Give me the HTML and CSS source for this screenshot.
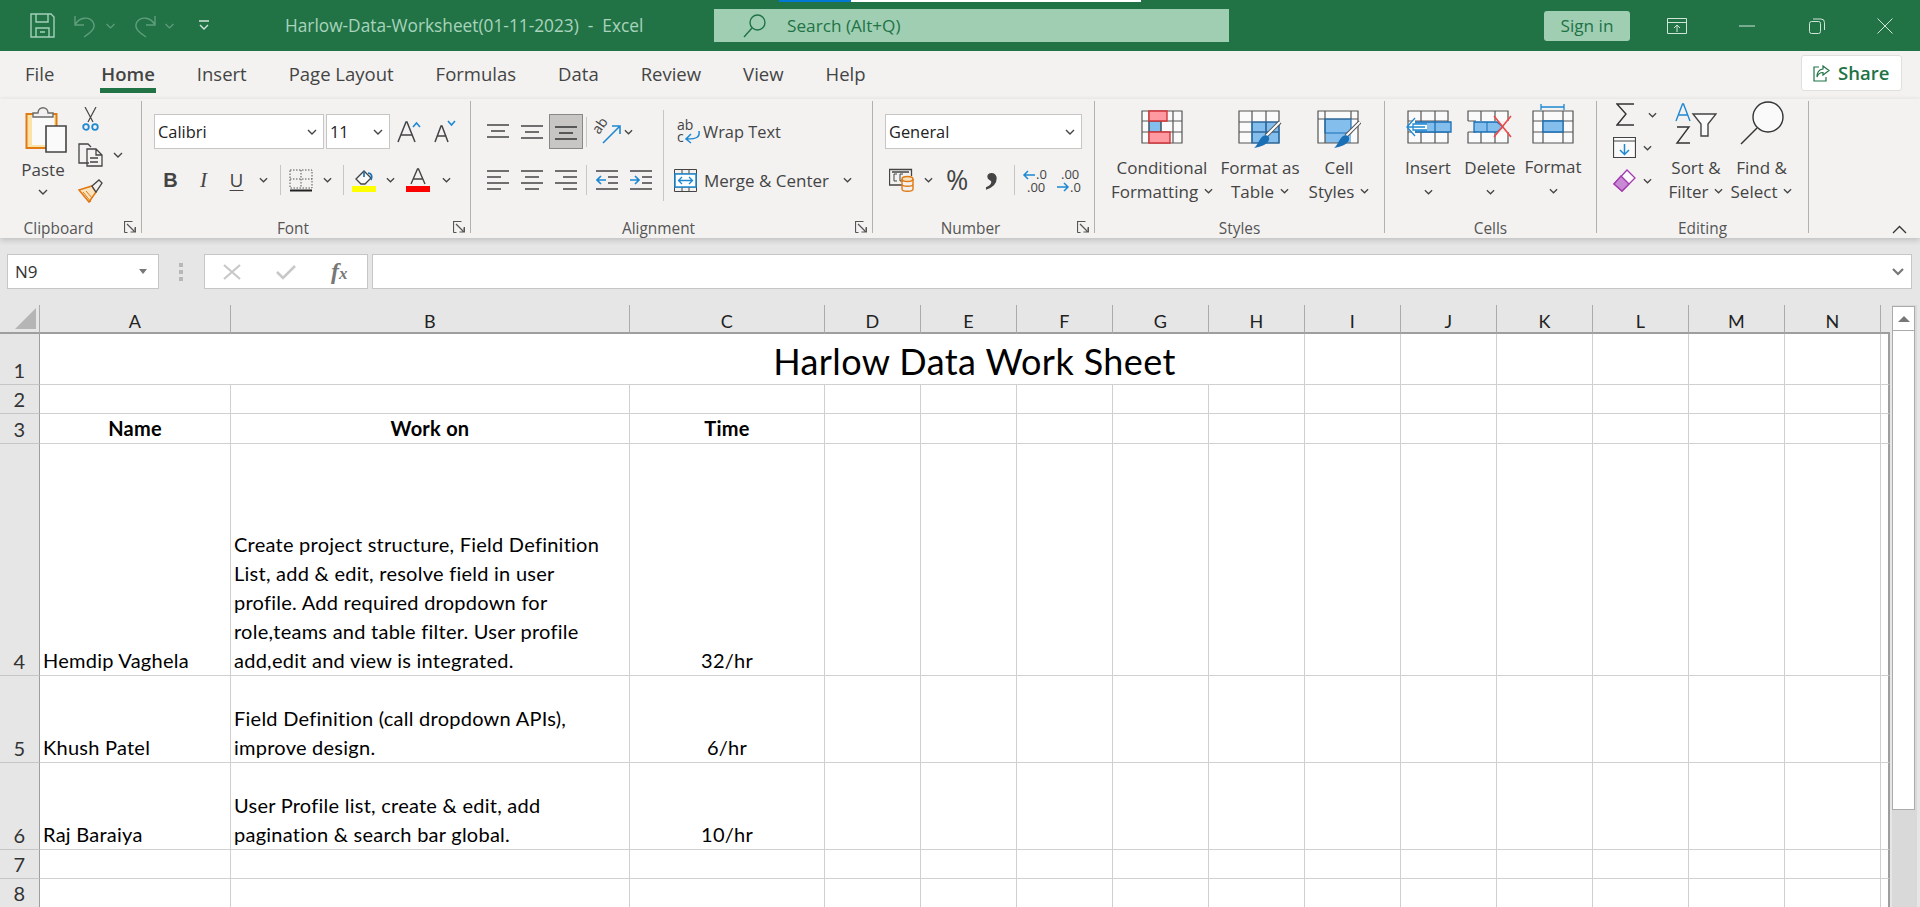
FILE: index.html
```html
<!DOCTYPE html>
<html lang="en">
  <head>
    <meta charset="UTF-8" />
    <title>Harlow-Data-Worksheet(01-11-2023) - Excel</title>
    <link rel="stylesheet" href="styles.css">
  </head>
  <body>
    <svg class="defs" width="0" height="0">
      <symbol id="chev" viewBox="0 0 10 6"><path d="M1 1l4 4 4-4" fill="none" stroke="#444" stroke-width="1.4"/></symbol>
      <symbol id="launch" viewBox="0 0 12 12"><path d="M.5 11.5V.5h8M.5 11.5h3M11.5 11.5V6M3 3l8 8M11 6.5V11H6.5" fill="none" stroke="#555" stroke-width="1.2"/></symbol>
    </svg>

    <header class="titlebar">
      <div class="qat">
        <svg class="q-save" width="25" height="25" viewBox="0 0 25 25" fill="none" stroke="#a3d0b8" stroke-width="1.4"><path d="M1 1h20l3 3v20H1zM6 1v8h12V1M6 24v-9h13v9M10 19h5"/></svg>
        <svg class="q-undo" width="23" height="24" viewBox="0 0 23 24" fill="none" stroke="#5f9e7c" stroke-width="1.4"><path d="M1 2v9h9M1 11C5 3 15 2 19 8c3 5 0 9-9 15"/></svg>
        <svg class="q-chev" width="9" height="6"><path d="M.5 1l4 4 4-4" fill="none" stroke="#5f9e7c" stroke-width="1.2"/></svg>
        <svg class="q-redo" width="23" height="24" viewBox="0 0 23 24" fill="none" stroke="#5f9e7c" stroke-width="1.4"><path d="M22 2v9h-9M22 11C18 3 8 2 4 8c-3 5 0 9 9 15"/></svg>
        <svg class="q-chev" width="9" height="6"><path d="M.5 1l4 4 4-4" fill="none" stroke="#5f9e7c" stroke-width="1.2"/></svg>
        <svg class="q-more" width="12" height="11" viewBox="0 0 12 11" fill="none" stroke="#cfe5d9" stroke-width="1.4"><path d="M1 1h10M2 5l4 4 4-4"/></svg>
      </div>
      <div class="doc-title">Harlow-Data-Worksheet(01-11-2023)&nbsp; -&nbsp; Excel</div>
      <div class="searchbox">
        <svg width="24" height="24" viewBox="0 0 24 24" fill="none" stroke="#217346" stroke-width="1.4"><circle cx="14.5" cy="8.5" r="7.5"/><path d="M9 14L1 23"/></svg>
        <span>Search (Alt+Q)</span>
      </div>
      <div class="signin">Sign in</div>
      <div class="winbtns">
        <svg width="20" height="16" viewBox="0 0 20 16" fill="none" stroke="#cfe5d9"><path d="M.5 .5h19v15H.5zM.5 4.5h19M10 14V7M7 10l3-3 3 3"/></svg>
        <svg width="16" height="2" viewBox="0 0 16 2"><path d="M0 1h16" stroke="#cfe5d9"/></svg>
        <svg width="16" height="16" viewBox="0 0 16 16" fill="none" stroke="#cfe5d9"><rect x=".5" y="3.5" width="11" height="12" rx="2"/><path d="M4 1h8a3.5 3.5 0 0 1 3.5 3.5V12"/></svg>
        <svg width="16" height="16" viewBox="0 0 16 16" fill="none" stroke="#cfe5d9"><path d="M.5 .5l15 15M15.5 .5l-15 15"/></svg>
      </div>
      <div class="loadbar"><i></i><b></b></div>
    </header>

    <nav class="tabs">
      <a>File</a>
      <a class="active">Home</a>
      <a>Insert</a>
      <a>Page Layout</a>
      <a>Formulas</a>
      <a>Data</a>
      <a>Review</a>
      <a>View</a>
      <a>Help</a>
      <div class="share">
        <svg width="17" height="17" viewBox="0 0 17 17" fill="none" stroke="#217346" stroke-width="1.2"><path d="M6 2H1v14h12v-4M10 1l6 4.5-6 4.5V7.5C7 7.5 5 9 4 12c0-5 2-7.5 6-8z"/></svg>
        Share
      </div>
    </nav>

    <section class="ribbon">
      <!-- Clipboard -->
      <div class="group g-clipboard">
        <div class="body">
          <div class="paste">
            <svg class="paste-ic" width="42" height="46" viewBox="0 0 42 46" fill="none">
              <path d="M1.5 7h30v34h-30z" fill="#fbe3a8" stroke="#e07a14" stroke-width="2"/>
              <path d="M7 8h22v30H7z" fill="#fafafa"/>
              <path d="M8 10V6h5c0-7 10-7 10 0h5v4z" fill="#f2f1f0" stroke="#6b6b6b" stroke-width="1.4"/>
              <path d="M21 19h20v26H21z" fill="#fafafa" stroke="#444" stroke-width="1.6"/>
            </svg>
            <span class="lbl">Paste</span>
            <svg class="chev" width="10" height="6"><use href="#chev"/></svg>
          </div>
          <div class="clip-small">
            <svg width="17" height="24" viewBox="0 0 17 24" fill="none"><path d="M3 0l8 15M14 0L6 15" stroke="#444" stroke-width="1.2"/><circle cx="4" cy="20" r="2.8" stroke="#1e88d2" stroke-width="1.8"/><circle cx="13" cy="20" r="2.8" stroke="#1e88d2" stroke-width="1.8"/></svg>
            <div class="copy-row">
              <svg width="25" height="24" viewBox="0 0 25 24" fill="none" stroke="#444" stroke-width="1.3"><path d="M11 20H1V1h9l3 3"/><path d="M9 6h9l6 6v11H9zM18 6v6h6M12 15h8M12 19h8"/></svg>
              <svg class="chev" width="10" height="6"><use href="#chev"/></svg>
            </div>
            <svg width="25" height="24" viewBox="0 0 25 24" fill="none"><path d="M1 11l13-4 4 6-7 10z" fill="#fbe3c0" stroke="#e07a14" stroke-width="1.6"/><path d="M5 13l8 10M8 12l6 7" stroke="#e07a14"/><path d="M14 7l7-6 3 3-6 9z" fill="#f2f1f0" stroke="#444" stroke-width="1.3"/></svg>
          </div>
        </div>
        <div class="foot">Clipboard<svg class="launcher" width="12" height="12"><use href="#launch"/></svg></div>
      </div>

      <!-- Font -->
      <div class="group g-font">
        <div class="body col">
          <div class="row">
            <div class="select sel-font">Calibri<svg width="10" height="6"><use href="#chev"/></svg></div>
            <div class="select sel-size">11<svg width="10" height="6"><use href="#chev"/></svg></div>
            <svg class="grow" width="24" height="24" viewBox="0 0 24 24" fill="none"><path d="M1 22L9 2h1l8 20M4 15h11" stroke="#444" stroke-width="1.5"/><path d="M16 7l3.5-4L23 7" stroke="#1e88d2" stroke-width="1.6"/></svg>
            <svg class="shrink" width="22" height="24" viewBox="0 0 22 24" fill="none"><path d="M1 22L7 6h1l6 16M3.5 16h9" stroke="#444" stroke-width="1.5"/><path d="M14 1l3.5 4L21 1" stroke="#1e88d2" stroke-width="1.6"/></svg>
          </div>
          <div class="row row2">
            <div class="tool fmt-b">B</div>
            <div class="tool fmt-i">I</div>
            <div class="tool fmt-u">U</div>
            <div class="drop"><svg width="9" height="6"><use href="#chev"/></svg></div>
            <div class="vsep s-a"></div>
            <div class="tool"><svg width="24" height="23" viewBox="0 0 24 23" fill="none"><path d="M1 1h22v18H1zM12 1v18M1 10h22" stroke="#555" stroke-dasharray="1.5 1.5"/><path d="M1 21.5h22" stroke="#222" stroke-width="2"/></svg></div>
            <div class="drop"><svg width="9" height="6"><use href="#chev"/></svg></div>
            <div class="vsep s-b"></div>
            <div class="tool"><svg width="24" height="24" viewBox="0 0 24 24" fill="none"><path d="M4 11l8-8 7 7-6 6H9z" fill="#fafafa" stroke="#444" stroke-width="1.3"/><path d="M12 3v6M19 12c2-4 0-7-3-7" stroke="#1a6fb5" stroke-width="1.7"/><path d="M0 21h24" stroke="#ff0" stroke-width="6"/></svg></div>
            <div class="drop"><svg width="9" height="6"><use href="#chev"/></svg></div>
            <div class="tool t-color"><svg width="24" height="24" viewBox="0 0 24 24" fill="none"><path d="M5 16L11.5 1h1L19 16M7.5 11h9" stroke="#444" stroke-width="1.4"/><path d="M0 21h24" stroke="#f00" stroke-width="6"/></svg></div>
            <div class="drop"><svg width="9" height="6"><use href="#chev"/></svg></div>
          </div>
        </div>
        <div class="foot">Font<svg class="launcher" width="12" height="12"><use href="#launch"/></svg></div>
      </div>

      <!-- Alignment -->
      <div class="group g-align">
        <div class="body">
          <div class="col align-left">
            <div class="row">
              <div class="tool t-a"><svg width="22" height="16" viewBox="0 0 22 16" stroke="#444" stroke-width="1.4"><path d="M0 1h22M4 7h14M0 13h22"/></svg></div>
              <div class="tool t-a"><svg width="22" height="16" viewBox="0 0 22 16" stroke="#444" stroke-width="1.4"><path d="M0 2h22M4 8h14M0 14h22"/></svg></div>
              <div class="tool t-a selected"><svg width="22" height="16" viewBox="0 0 22 16" stroke="#333" stroke-width="1.4"><path d="M0 3h22M4 9h14M0 15h22"/></svg></div>
              <div class="vsep s-c"></div>
              <div class="tool t-o"><svg class="txt-ic" width="25" height="24" viewBox="0 0 25 24" fill="none"><text class="mini" transform="translate(4 15) rotate(-55)">ab</text><path d="M8 23L24 7M17 6h8v8" stroke="#1e88d2" stroke-width="1.6"/></svg></div>
              <svg class="chev" width="9" height="6"><use href="#chev"/></svg>
            </div>
            <div class="row row2">
              <div class="tool t-a"><svg width="22" height="20" viewBox="0 0 22 20" stroke="#444" stroke-width="1.4"><path d="M0 1h22M0 7h14M0 13h22M0 19h14"/></svg></div>
              <div class="tool t-a"><svg width="22" height="20" viewBox="0 0 22 20" stroke="#444" stroke-width="1.4"><path d="M0 1h22M4 7h14M0 13h22M4 19h14"/></svg></div>
              <div class="tool t-a"><svg width="22" height="20" viewBox="0 0 22 20" stroke="#444" stroke-width="1.4"><path d="M0 1h22M8 7h14M0 13h22M8 19h14"/></svg></div>
              <div class="vsep s-c"></div>
              <div class="tool t-a"><svg width="22" height="20" viewBox="0 0 22 20" fill="none" stroke-width="1.4"><path d="M0 1h22M12 7h10M12 13h10M0 19h22" stroke="#444"/><path d="M1 10h9M5 6l-4 4 4 4" stroke="#1e88d2" stroke-width="1.7"/></svg></div>
              <div class="tool t-a"><svg width="22" height="20" viewBox="0 0 22 20" fill="none" stroke-width="1.4"><path d="M0 1h22M12 7h10M12 13h10M0 19h22" stroke="#444"/><path d="M0 10h9M5 6l4 4-4 4" stroke="#1e88d2" stroke-width="1.7"/></svg></div>
            </div>
          </div>
          <div class="vsep-tall"></div>
          <div class="col align-right">
            <div class="row wrap-row">
              <svg class="txt-ic" width="23" height="24" viewBox="0 0 23 24" fill="none"><text x="0" y="10" class="mini">ab</text><text x="0" y="22" class="mini">c</text><path d="M22 11c1 6-2 8-12 8M14 14l-5 5 5 4" stroke="#1e88d2" stroke-width="1.5"/></svg>
              <span class="lbl wrap-lbl">Wrap Text</span>
            </div>
            <div class="row merge-row">
              <svg width="23" height="23" viewBox="0 0 23 23" fill="none"><path d="M.5 .5h22v22H.5zM.5 5h22M.5 18h22M8 .5V5M15 .5V5M8 18v4.5M15 18v4.5" stroke="#444"/><path d="M1 5h21v13H1z" fill="#fff" stroke="#1e88d2" stroke-width="1.5"/><path d="M5 11.5h13M8 8l-3.5 3.5L8 15M15 8l3.5 3.5L15 15" stroke="#1e88d2" stroke-width="1.3"/></svg>
              <span class="lbl">Merge &amp; Center</span>
              <svg class="chev" width="9" height="6"><use href="#chev"/></svg>
            </div>
          </div>
        </div>
        <div class="foot">Alignment<svg class="launcher" width="12" height="12"><use href="#launch"/></svg></div>
      </div>

      <!-- Number -->
      <div class="group g-number">
        <div class="body col">
          <div class="row">
            <div class="select sel-num">General<svg width="10" height="6"><use href="#chev"/></svg></div>
          </div>
          <div class="row row2">
            <svg class="acct" width="25" height="24" viewBox="0 0 25 24" fill="none"><path d="M13 17H.5V1.5h22V8M3 4h17" stroke="#444" stroke-width="1.3"/><path d="M8 6H5v7h3M14 6h-3v7h3" stroke="#444"/><ellipse cx="18.5" cy="11" rx="5.5" ry="2.5" fill="#fbe3c0" stroke="#e07a14" stroke-width="1.4"/><path d="M13 11v10c0 3 11 3 11 0V11M13 16c0 3 11 3 11 0" fill="none" stroke="#e07a14" stroke-width="1.4"/></svg>
            <svg class="chev c-acct" width="9" height="6"><use href="#chev"/></svg>
            <div class="glyph pct">%</div>
            <div class="glyph comma">,</div>
            <div class="vsep s-d"></div>
            <svg class="txt-ic dec-1" width="24" height="24" viewBox="0 0 24 24" fill="none"><path d="M1 7h11M5 3L1 7l4 4" stroke="#1e88d2" stroke-width="1.5"/><text x="13" y="11" class="mini-n">.0</text><text x="4" y="24" class="mini-n">.00</text></svg>
            <svg class="txt-ic dec-2" width="24" height="24" viewBox="0 0 24 24" fill="none"><text x="4" y="11" class="mini-n">.00</text><path d="M0 19h11M7 15l4 4-4 4" stroke="#1e88d2" stroke-width="1.5"/><text x="13" y="24" class="mini-n">.0</text></svg>
          </div>
        </div>
        <div class="foot">Number<svg class="launcher" width="12" height="12"><use href="#launch"/></svg></div>
      </div>

      <!-- Styles -->
      <div class="group g-styles">
        <div class="body">
          <div class="big w-cond">
            <svg width="42" height="34" viewBox="0 0 42 34" fill="none">
              <path d="M1 1h40v32H1z" fill="#fafafa"/>
              <path d="M8 11h12v11H8z" fill="#83beec" stroke="#1a6fb5"/>
              <path d="M1 1h40v32H1zM1 11h40M1 22h40M8 1v32M20 1v32M32 1v32" stroke="#555" stroke-width="1.2"/>
              <path d="M8 1h18v10H8zM8 22h21v11H8z" fill="#ff9aa2" stroke="#d13438" stroke-width="1.4"/>
            </svg>
            <span>Conditional</span>
            <span>Formatting<svg class="chev" width="9" height="6"><use href="#chev"/></svg></span>
          </div>
          <div class="big w-fmt">
            <svg width="44" height="40" viewBox="0 0 44 40" fill="none">
              <path d="M1 1h40v32H1z" fill="#fafafa"/>
              <path d="M14 12h27v21H14z" fill="#83beec"/>
              <path d="M1 1h40v32H1zM1 12h40M1 22h40M14 1v32M28 1v32" stroke="#555" stroke-width="1.2"/>
              <path d="M14 12h27v21H14zM14 22h27M28 12v21" stroke="#1a6fb5" stroke-width="1.2"/>
              <path d="M42 12L28 26" stroke="#555" stroke-width="4"/>
              <path d="M42 12L28 26" stroke="#fff" stroke-width="2"/>
              <path d="M25 26c4-2 7 1 6 4-2 5-9 7-15 8 4-3 5-9 9-12z" fill="#1a6fb5"/>
            </svg>
            <span>Format as</span>
            <span>Table<svg class="chev" width="9" height="6"><use href="#chev"/></svg></span>
          </div>
          <div class="big w-cell">
            <svg width="44" height="40" viewBox="0 0 44 40" fill="none">
              <path d="M1 1h40v32H1z" fill="#fafafa"/>
              <path d="M8 9h26v24H8z" fill="#83beec"/>
              <path d="M1 1h40v32H1zM1 9h40M8 1v32M34 1v8" stroke="#555" stroke-width="1.2"/>
              <path d="M8 9h26v14H8z" stroke="#1a6fb5" stroke-width="1.2"/>
              <path d="M43 12L29 26" stroke="#555" stroke-width="4"/>
              <path d="M43 12L29 26" stroke="#fff" stroke-width="2"/>
              <path d="M26 26c4-2 7 1 6 4-2 5-9 7-15 8 4-3 5-9 9-12z" fill="#1a6fb5"/>
            </svg>
            <span>Cell</span>
            <span>Styles<svg class="chev" width="9" height="6"><use href="#chev"/></svg></span>
          </div>
        </div>
        <div class="foot">Styles</div>
      </div>

      <!-- Cells -->
      <div class="group g-cells">
        <div class="body">
          <div class="big cell-btn">
            <svg width="47" height="34" viewBox="0 0 47 34" fill="none">
              <path d="M3 1h40v32H3z" fill="#fafafa"/>
              <path d="M3 1h40v32H3zM3 11h40M3 22h40M16 1v32M30 1v32" stroke="#555" stroke-width="1.2"/>
              <path d="M10 12h36v10H10z" fill="#83beec"/>
              <path d="M10 12h36v10H30V12M30 22H10" stroke="#1a6fb5" stroke-width="1.3"/>
              <path d="M20 17H2M10 8l-8 9 8 9M22 14H8v6h14" fill="#fff" stroke="#1e88d2" stroke-width="1.3"/>
            </svg>
            <span>Insert</span>
            <svg class="chev" width="9" height="6"><use href="#chev"/></svg>
          </div>
          <div class="big cell-btn cell-del">
            <svg width="47" height="34" viewBox="0 0 47 34" fill="none">
              <path d="M1 1h40v10H1zM1 22h40v11H1z" fill="#fafafa"/>
              <path d="M1 11V1h40v10M1 22v11h40V22M1 11h8M1 22h8M14 1v10M28 1v10M14 22v11M28 22v11" stroke="#555" stroke-width="1.2"/>
              <path d="M7 12h23l6 5-6 5H7z" fill="#83beec" stroke="#1a6fb5" stroke-width="1.3"/>
              <path d="M20 12v10" stroke="#1a6fb5"/>
              <path d="M27 6l17 21M44 6L27 27" stroke="#ef4a4a" stroke-width="1.6"/>
            </svg>
            <span>Delete</span>
            <svg class="chev" width="9" height="6"><use href="#chev"/></svg>
          </div>
          <div class="big cell-btn cell-fmt">
            <svg width="42" height="41" viewBox="0 0 42 41" fill="none">
              <path d="M9 4h23M9 1v6M32 1v6" stroke="#1e88d2" stroke-width="1.3"/>
              <path d="M1 8h40v32H1z" fill="#fafafa"/>
              <path d="M1 8h40v32H1zM1 18h40M1 29h40M11 8v32M31 8v32" stroke="#555" stroke-width="1.2"/>
              <path d="M11 18h20v11H11z" fill="#83beec" stroke="#1a6fb5" stroke-width="1.3"/>
            </svg>
            <span>Format</span>
            <svg class="chev" width="9" height="6"><use href="#chev"/></svg>
          </div>
        </div>
        <div class="foot">Cells</div>
      </div>

      <!-- Editing -->
      <div class="group g-editing">
        <div class="body">
          <div class="col edit-small">
            <div class="row sum-row">
              <svg width="19" height="23" viewBox="0 0 19 23" fill="none"><path d="M18 1H1l9 10-9 11h17" stroke="#333" stroke-width="1.4"/></svg>
              <svg class="chev" width="9" height="6"><use href="#chev"/></svg>
            </div>
            <div class="row">
              <svg width="23" height="21" viewBox="0 0 23 21" fill="none"><path d="M.5 .5h22v20H.5z" fill="#fafafa" stroke="#444" stroke-width="1.2"/><path d="M.5 4h22" stroke="#444"/><path d="M11.5 7v10M7 13l4.5 4.5L16 13" stroke="#1e88d2" stroke-width="1.5"/></svg>
              <svg class="chev" width="9" height="6"><use href="#chev"/></svg>
            </div>
            <div class="row">
              <svg width="23" height="23" viewBox="0 0 23 23" fill="none"><path d="M1 15L14 1l8 8L9 22z" fill="#fafafa" stroke="#a33ab0" stroke-width="1.3"/><path d="M1 15l7-8 8 8-7 7z" fill="#c98ad4" stroke="#a33ab0" stroke-width="1.3"/></svg>
              <svg class="chev" width="9" height="6"><use href="#chev"/></svg>
            </div>
          </div>
          <div class="big w-sort">
            <svg width="42" height="41" viewBox="0 0 42 41" fill="none"><path d="M1 18L7.5 1h1L15 18M4 12h9" stroke="#1e88d2" stroke-width="1.4"/><path d="M2 24h12L2 40h13" stroke="#333" stroke-width="1.4"/><path d="M18 11h23l-8 10v12h-7V21z" fill="#fafafa" stroke="#444" stroke-width="1.4"/></svg>
            <span>Sort &amp;</span>
            <span>Filter<svg class="chev" width="9" height="6"><use href="#chev"/></svg></span>
          </div>
          <div class="big w-find">
            <svg width="44" height="44" viewBox="0 0 44 44" fill="none"><circle cx="28" cy="16" r="15" fill="#fafafa" stroke="#333" stroke-width="1.4"/><path d="M17 27L1 43" stroke="#333" stroke-width="1.4"/></svg>
            <span>Find &amp;</span>
            <span>Select<svg class="chev" width="9" height="6"><use href="#chev"/></svg></span>
          </div>
        </div>
        <div class="foot">Editing</div>
      </div>
      <svg class="collapse" width="15" height="9" viewBox="0 0 15 9" fill="none"><path d="M1 8l6.5-6.5L14 8" stroke="#333" stroke-width="1.3"/></svg>
    </section>

    <section class="formulabar">
      <div class="namebox">N9<svg width="10" height="5" viewBox="0 0 10 5"><path d="M1 0h8L5 5z" fill="#777"/></svg></div>
      <div class="grip"><i></i><i></i><i></i></div>
      <div class="fxbox">
        <svg width="18" height="16" viewBox="0 0 18 16" fill="none"><path d="M1 1l16 14M17 1L1 15" stroke="#c8c8c8" stroke-width="2.2"/></svg>
        <svg width="20" height="16" viewBox="0 0 20 16" fill="none"><path d="M1 8l6 6L19 2" stroke="#c8c8c8" stroke-width="2.6"/></svg>
        <span class="fx">f<small>x</small></span>
      </div>
      <div class="fxinput"><svg width="12" height="8" viewBox="0 0 12 8" fill="none"><path d="M1 1l5 5 5-5" stroke="#777" stroke-width="2.2"/></svg></div>
    </section>

    <main class="sheet">
      <table class="grid">
        <colgroup>
          <col class="c-rh" /><col class="c-a" /><col class="c-b" /><col class="c-c" />
          <col class="c-n" /><col class="c-n" /><col class="c-n" /><col class="c-n" /><col class="c-n" />
          <col class="c-n" /><col class="c-n" /><col class="c-n" /><col class="c-n" /><col class="c-n" /><col class="c-n" />
          <col class="c-o" />
        </colgroup>
        <thead>
          <tr>
            <th class="corner"><span class="tri"></span></th>
            <th>A</th><th>B</th><th>C</th><th>D</th><th>E</th><th>F</th><th>G</th><th>H</th>
            <th>I</th><th>J</th><th>K</th><th>L</th><th>M</th><th>N</th><th class="last"></th>
          </tr>
        </thead>
        <tbody>
          <tr class="r-title">
            <th>1</th>
            <td colspan="8" class="sheet-title">Harlow Data Work Sheet</td>
            <td></td><td></td><td></td><td></td><td></td><td></td><td></td>
          </tr>
          <tr class="r-1">
            <th>2</th>
            <td></td><td></td><td></td><td></td><td></td><td></td><td></td><td></td>
            <td></td><td></td><td></td><td></td><td></td><td></td><td></td>
          </tr>
          <tr class="r-1">
            <th>3</th>
            <td class="hd">Name</td><td class="hd">Work on</td><td class="hd">Time</td>
            <td></td><td></td><td></td><td></td><td></td>
            <td></td><td></td><td></td><td></td><td></td><td></td><td></td>
          </tr>
          <tr class="r-8">
            <th>4</th>
            <td>Hemdip Vaghela</td>
            <td>Create project structure, Field Definition<br>List, add &amp; edit, resolve field in user<br>profile. Add required dropdown for<br>role,teams and table filter. User profile<br>add,edit and view is integrated.</td>
            <td class="ctr">32/hr</td>
            <td></td><td></td><td></td><td></td><td></td>
            <td></td><td></td><td></td><td></td><td></td><td></td><td></td>
          </tr>
          <tr class="r-3">
            <th>5</th>
            <td>Khush Patel</td>
            <td>Field Definition (call dropdown APIs),<br>improve design.</td>
            <td class="ctr">6/hr</td>
            <td></td><td></td><td></td><td></td><td></td>
            <td></td><td></td><td></td><td></td><td></td><td></td><td></td>
          </tr>
          <tr class="r-3">
            <th>6</th>
            <td>Raj Baraiya</td>
            <td>User Profile list, create &amp; edit, add<br>pagination &amp; search bar global.</td>
            <td class="ctr">10/hr</td>
            <td></td><td></td><td></td><td></td><td></td>
            <td></td><td></td><td></td><td></td><td></td><td></td><td></td>
          </tr>
          <tr class="r-1">
            <th>7</th>
            <td></td><td></td><td></td><td></td><td></td><td></td><td></td><td></td>
            <td></td><td></td><td></td><td></td><td></td><td></td><td></td>
          </tr>
          <tr class="r-1">
            <th>8</th>
            <td></td><td></td><td></td><td></td><td></td><td></td><td></td><td></td>
            <td></td><td></td><td></td><td></td><td></td><td></td><td></td>
          </tr>
        </tbody>
      </table>
      <div class="vscroll">
        <div class="sb-up"><svg width="12" height="6" viewBox="0 0 12 6"><path d="M6 0l6 6H0z" fill="#777"/></svg></div>
        <div class="sb-thumb"></div>
      </div>
    </main>
  </body>
</html>
```

FILE: styles.css
```css
* {
  box-sizing: border-box;
}

html,
body {
  margin: 0;
  padding: 0;
  height: 907px;
  overflow: hidden;
}

body {
  font-family: "Open Sans", "Noto Sans", sans-serif;
  background-color: #e6e6e6;
  color: #444;
}

svg {
  display: block;
  flex: none;
}

.txt-ic {
  overflow: visible;
}

.defs {
  position: absolute;
}

/* Title bar */
.titlebar {
  position: relative;
  display: flex;
  align-items: center;
  height: 51px;
  background-color: #217346;
  color: #a9d3bc;
}

.qat {
  display: flex;
  align-items: center;
  width: 285px;
  padding-left: 30px;
}

.q-undo {
  margin-left: 19px;
}

.q-chev {
  margin-left: 9px;
}

.q-redo {
  margin-left: 18px;
}

.q-more {
  margin-left: 24px;
}

.doc-title {
  width: 429px;
  font-size: 17.3px;
  white-space: nowrap;
}

.searchbox {
  display: flex;
  align-items: center;
  width: 515px;
  height: 33px;
  padding-left: 29px;
  background-color: #9fceb3;
  color: #217346;
  font-size: 17.2px;
}

.searchbox span {
  margin-left: 20px;
}

.signin {
  width: 86px;
  height: 30px;
  margin-left: 315px;
  border-radius: 3px;
  background-color: #9fceb3;
  color: #217346;
  font-size: 17.2px;
  line-height: 30px;
  text-align: center;
}

.winbtns {
  display: flex;
  align-items: center;
  margin-left: 37px;
}

.winbtns svg:nth-child(2) {
  margin-left: 52px;
}

.winbtns svg:nth-child(3) {
  margin-left: 54px;
}

.winbtns svg:nth-child(4) {
  margin-left: 52px;
}

.loadbar {
  position: absolute;
  top: 0;
  left: 779px;
  display: flex;
  height: 2px;
}

.loadbar i {
  width: 72px;
  background-color: #0078d4;
}

.loadbar b {
  width: 290px;
  background-color: #fff;
}

/* Tabs */
.tabs {
  display: flex;
  align-items: flex-start;
  gap: 42px;
  height: 48px;
  padding: 11px 0 0 25px;
  background-color: #f3f2f1;
  font-size: 18.5px;
  line-height: 24px;
}

.tabs a {
  height: 26px;
  color: #444;
  white-space: nowrap;
}

.tabs a.active {
  margin: 0 -1px 0 4px;
  padding: 0 1px;
  font-weight: 600;
  box-shadow: 0 5px 0 #217346;
}

.share {
  display: flex;
  align-items: center;
  gap: 8px;
  width: 101px;
  height: 36px;
  margin: -7px 18px 0 auto;
  padding-left: 11px;
  border: 1px solid #e1dfdd;
  border-radius: 3px;
  background-color: #fff;
  color: #217346;
  font-weight: 600;
}

/* Ribbon */
.ribbon {
  position: relative;
  display: flex;
  height: 139px;
  padding-top: 2px;
  background-color: #f3f2f1;
  box-shadow: 0 2px 6px rgba(0, 0, 0, 0.18);
}

.group {
  display: flex;
  flex-direction: column;
  height: 132px;
  border-right: 1px solid #b3b0ad;
  font-size: 17px;
}

.body {
  display: flex;
  flex: 1;
  min-height: 0;
}

.col {
  display: flex;
  flex-direction: column;
}

.row {
  display: flex;
  align-items: center;
}

.foot {
  position: relative;
  height: 14px;
  font-size: 15.4px;
  line-height: 19px;
  text-align: center;
  color: #555;
}

.launcher {
  position: absolute;
  right: 5px;
  top: 2px;
}

.lbl {
  white-space: nowrap;
}

.wrap-lbl {
  font-size: 16.4px;
}

.g-clipboard {
  width: 142px;
}

.g-font {
  width: 329px;
}

.g-align {
  width: 402px;
}

.g-number {
  width: 222px;
}

.g-styles {
  width: 290px;
}

.g-cells {
  width: 212px;
}

.g-editing {
  width: 212px;
}

.g-font .foot,
.g-align .foot,
.g-number .foot {
  padding-right: 26px;
}

/* Clipboard */
.g-clipboard .foot {
  padding-right: 24px;
}

.paste {
  display: flex;
  flex-direction: column;
  align-items: center;
  width: 50px;
  margin: 6px 0 0 18px;
  line-height: 20px;
}

.paste-ic {
  margin-left: 6px;
}

.paste .lbl {
  margin-top: 7px;
}

.paste .chev {
  margin-top: 9px;
}

.clip-small {
  display: flex;
  flex-direction: column;
  gap: 12px;
  margin: 6px 0 0 10px;
}

.clip-small > svg:first-child {
  margin-left: 4px;
}

.copy-row {
  display: flex;
  align-items: center;
  gap: 10px;
}

/* Select boxes and small tools */
.select {
  display: flex;
  align-items: center;
  justify-content: space-between;
  height: 35px;
  padding: 0 6px 0 3px;
  border: 1px solid #c8c6c4;
  background-color: #fff;
  color: #222;
  font-size: 16.4px;
}

.sel-font {
  width: 170px;
}

.sel-size {
  width: 64px;
  margin-left: 2px;
}

.sel-num {
  width: 197px;
}

.grow {
  margin-left: 7px;
}

.shrink {
  margin-left: 13px;
}

.g-font .col,
.g-number .col {
  padding: 13px 0 0 12px;
}

.row2 {
  height: 30px;
  margin-top: 16px;
}

.tool {
  display: flex;
  align-items: center;
  justify-content: center;
  width: 33px;
  height: 30px;
}

.t-color {
  width: 36px;
}

.fmt-b {
  font-family: "Liberation Sans", sans-serif;
  font-size: 20px;
  font-weight: 700;
}

.fmt-i {
  font-family: "Liberation Serif", serif;
  font-size: 21px;
  font-style: italic;
}

.fmt-u {
  font-size: 19px;
  text-decoration: underline;
  text-decoration-thickness: 1px;
  text-underline-offset: 3px;
}

.drop {
  display: flex;
  align-items: center;
  justify-content: center;
  width: 20px;
}

.vsep {
  flex: none;
  width: 1px;
  height: 30px;
  background-color: #c8c6c4;
}

.s-a {
  margin: 0 3px 0 7px;
}

.s-b {
  margin: 0 3px 0 6px;
}

.s-c {
  margin: 0 3px;
}

.s-d {
  margin: 0 8px 0 15px;
}

/* Alignment */
.align-left {
  width: 192px;
  padding: 13px 0 0 10px;
}

.t-a {
  width: 34px;
  height: 35px;
}

.align-left .row2 {
  height: 30px;
}

.align-left .row2 .t-a {
  height: 30px;
}

.selected {
  border: 1px solid #8a8886;
  background-color: #c8c6c4;
}

.t-o {
  margin-left: 1px;
}

.vsep-tall {
  flex: none;
  width: 1px;
  height: 91px;
  margin-top: 9px;
  background-color: #c8c6c4;
}

.align-right {
  padding: 13px 0 0 10px;
}

.wrap-row {
  gap: 3px;
  height: 35px;
  margin-left: 3px;
}

.merge-row {
  gap: 7px;
  height: 30px;
  margin-top: 16px;
}

.merge-row .chev {
  margin-left: 7px;
}

.mini {
  font-family: "Open Sans", sans-serif;
  font-size: 14px;
  fill: #444;
}

.mini-n {
  font-family: "Open Sans", sans-serif;
  font-size: 13px;
  fill: #444;
}

/* Number */
.acct {
  margin-left: 4px;
}

.c-acct {
  margin-left: 10px;
}

.glyph {
  color: #444;
}

.pct {
  margin-left: 13px;
  font-size: 27px;
  line-height: 30px;
}

.comma {
  margin-left: 17px;
  font-family: "Liberation Serif", serif;
  font-size: 54px;
  font-weight: 700;
  line-height: 30px;
  transform: translateY(-17px);
}

.dec-2 {
  margin-left: 10px;
}

/* Large buttons */
.big {
  display: flex;
  flex-direction: column;
  align-items: center;
  padding-top: 9px;
  line-height: 23.5px;
  white-space: nowrap;
}

.big > span {
  display: flex;
  align-items: center;
  gap: 6px;
}

.big > svg:first-child {
  height: 34px;
  margin-bottom: 12px;
}

.g-styles .body {
  padding-left: 18px;
}

.w-cond {
  width: 98px;
}

.w-fmt {
  width: 98px;
}

.w-cell {
  width: 60px;
}

.w-fmt > svg:first-child,
.w-cell > svg:first-child {
  height: 40px;
  margin-bottom: 6px;
}

.g-cells .body {
  padding-left: 13px;
}

.cell-btn {
  width: 60px;
}

.cell-btn .chev {
  margin-top: 9px;
}

.cell-del {
  width: 64px;
}

.cell-fmt {
  width: 62px;
  padding-top: 2px;
}

.cell-fmt > svg:first-child {
  height: 41px;
  margin-bottom: 11px;
}

.g-editing .body {
  padding-left: 16px;
}

.edit-small {
  gap: 11px;
  width: 55px;
  padding-top: 2px;
}

.edit-small .row {
  gap: 7px;
}

.edit-small .sum-row {
  gap: 13px;
  margin-left: 3px;
}

.w-sort {
  width: 56px;
  padding-top: 0;
}

.w-sort > svg:first-child {
  height: 41px;
  margin: 2px 0 12px;
}

.w-find {
  width: 75px;
  padding-top: 0;
}

.w-find > svg:first-child {
  height: 44px;
  margin: 0 0 11px;
}

.collapse {
  position: absolute;
  right: 13px;
  bottom: 4px;
}

/* Formula bar */
.formulabar {
  display: flex;
  align-items: center;
  height: 51px;
  padding: 16px 8px 0 7px;
}

.namebox {
  display: flex;
  align-items: center;
  justify-content: space-between;
  width: 152px;
  height: 35px;
  padding: 0 10px 0 7px;
  border: 1px solid #c6c6c6;
  background-color: #fff;
  color: #333;
  font-size: 17px;
}

.grip {
  display: flex;
  flex-direction: column;
  gap: 3px;
  margin: 0 21px 0 20px;
}

.grip i {
  width: 4px;
  height: 4px;
  background-color: #b8b8b8;
}

.fxbox {
  display: flex;
  align-items: center;
  gap: 35px;
  width: 164px;
  height: 35px;
  padding-left: 18px;
  border: 1px solid #c6c6c6;
  background-color: #fff;
}

.fx {
  font-family: "Liberation Serif", serif;
  font-size: 24px;
  font-style: italic;
  font-weight: 700;
  color: #777;
}

.fx small {
  font-size: 17px;
}

.fxinput {
  display: flex;
  align-items: center;
  justify-content: flex-end;
  flex: 1;
  height: 35px;
  margin-left: 4px;
  padding-right: 7px;
  border: 1px solid #c6c6c6;
  background-color: #fff;
}

/* Sheet */
.sheet {
  display: flex;
  margin-top: 16px;
}

.grid {
  width: 1890px;
  height: 602px;
  border-collapse: separate;
  border-spacing: 0;
  table-layout: fixed;
  background-color: #fff;
  font-family: Lato, "Liberation Sans", sans-serif;
  font-size: 20px;
  letter-spacing: 0.25px;
  color: #000;
}

.c-rh {
  width: 40px;
}

.c-a {
  width: 191px;
}

.c-b {
  width: 399px;
}

.c-c {
  width: 195px;
}

.c-n {
  width: 96px;
}

.c-o {
  width: 9px;
}

.grid thead th {
  height: 29px;
  padding: 5px 0 0;
  border-right: 1px solid #ababab;
  border-bottom: 2px solid #9e9e9e;
  background-color: #e6e6e6;
  font-weight: 400;
  font-size: 18px;
  color: #222;
}

.grid thead th.last {
  border-right: 0;
}

.corner {
  position: relative;
}

.tri {
  position: absolute;
  right: 3px;
  bottom: 3px;
  width: 0;
  height: 0;
  border-left: 21px solid transparent;
  border-bottom: 21px solid #b5b5b5;
}

.grid tbody th {
  padding: 0;
  border-right: 1px solid #9e9e9e;
  border-bottom: 1px solid #c6c6c6;
  background-color: #e6e6e6;
  font-weight: 400;
  line-height: 27px;
  color: #333;
  vertical-align: bottom;
}

.grid td {
  padding: 0 3px;
  border-right: 1px solid #d0d0d0;
  border-bottom: 1px solid #d0d0d0;
  line-height: 29px;
  vertical-align: bottom;
  white-space: nowrap;
  overflow: hidden;
}

.grid td:last-child {
  border-right: 2px solid #9e9e9e;
}

.r-title {
  height: 51px;
}

.r-1 {
  height: 29px;
}

.r-8 {
  height: 232px;
}

.r-3 {
  height: 87px;
}

.grid td.hd {
  font-weight: 700;
  text-align: center;
}

.grid td.ctr {
  text-align: center;
}

.grid td.sheet-title {
  padding-left: 608px;
  font-size: 36px;
  letter-spacing: 0.4px;
  line-height: 46px;
  text-align: center;
}

.vscroll {
  display: flex;
  flex-direction: column;
  width: 26px;
  margin-left: 2px;
  padding: 1px 3px 0 0;
  background: linear-gradient(#d9d9d9, #d9d9d9) no-repeat 0 0 / 25px 100%;
}

.sb-up {
  display: flex;
  align-items: center;
  justify-content: center;
  height: 25px;
  border: 1px solid #ababab;
  background-color: #fff;
}

.sb-thumb {
  height: 479px;
  border: 1px solid #ababab;
  border-top: 0;
  background-color: #fff;
}
```
